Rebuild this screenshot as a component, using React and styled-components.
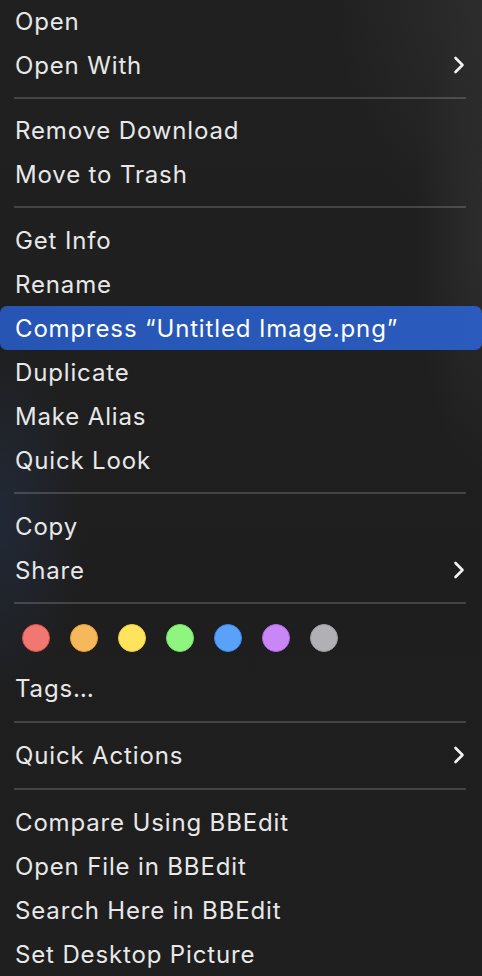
import React from 'react';
import styled, { createGlobalStyle } from 'styled-components';

const Global = createGlobalStyle`
  html, body {
    margin: 0;
    padding: 0;
    background: #1e1e1e;
  }
  body {
    font-family: Inter, "Noto Sans", sans-serif;
    -webkit-font-smoothing: antialiased;
  }
`;

const Menu = styled.div`
  width: 482px;
  height: 976px;
  overflow: hidden;
  box-sizing: border-box;
  margin-top: -1px;
  background:
    radial-gradient(ellipse 120px 260px at 0px 520px, rgba(40, 60, 100, 0.35), transparent 70%),
    radial-gradient(ellipse 200px 300px at 482px 0px, rgba(60, 60, 60, 0.45), transparent 75%),
    radial-gradient(ellipse 90px 320px at 482px 240px, rgba(70, 70, 70, 0.35), transparent 75%),
    linear-gradient(180deg, #202020 0%, #1e1e1e 60%, #1f1f1f 100%);
`;

const Item = styled.div`
  height: 44px;
  display: flex;
  align-items: center;
  justify-content: space-between;
  padding: 0 17px 0 15px;
  font-size: 24px;
  letter-spacing: 0.85px;
  color: ${p => (p.active ? '#ffffff' : '#e8e8e8')};
  background: ${p => (p.active ? 'linear-gradient(90deg, #2655b4, #2a5bbd)' : 'transparent')};
  border-radius: ${p => (p.active ? '7px' : '0')};
  white-space: nowrap;
`;

const Separator = styled.div`
  height: ${p => p.h || 21}px;
  box-sizing: border-box;
  display: flex;
  align-items: ${p => (p.top != null ? 'flex-start' : 'center')};
  padding: ${p => p.top || 0}px 16px 0 14px;

  &::after {
    content: '';
    flex: 1;
    height: 2px;
    background: rgba(255, 255, 255, 0.17);
  }
`;

const TagRow = styled.div`
  height: 56px;
  display: flex;
  align-items: center;
  gap: 20px;
  padding: 0 0 0 22px;
`;

const Dot = styled.span`
  width: 28px;
  height: 28px;
  border-radius: 50%;
  box-sizing: border-box;
  background: ${p => p.fill};
  border: 1.5px solid ${p => p.edge};
`;

const Chevron = () => (
  <svg width="12" height="18" viewBox="0 0 12 18" fill="none">
    <path d="M2.5 2 L9.5 9 L2.5 16" stroke="#f2f2f2" strokeWidth="2.6" strokeLinecap="round" strokeLinejoin="round" />
  </svg>
);

const tags = [
  ['#f07870', '#dc5048'],
  ['#f5b85a', '#e9a038'],
  ['#fee35e', '#f2cf3c'],
  ['#8ef57e', '#74e266'],
  ['#5aa2f9', '#3a88f0'],
  ['#c886f7', '#b46ae8'],
  ['#b1b1b5', '#9c9ca0'],
];

const Row = ({ label, sub, active }) => (
  <Item active={active}>
    <span>{label}</span>
    {sub && <Chevron />}
  </Item>
);

export default function App() {
  return (
    <>
      <Global />
      <Menu>
        <Row label="Open" />
        <Row label="Open With" sub />
        <Separator />
        <Row label="Remove Download" />
        <Row label="Move to Trash" />
        <Separator h={22} />
        <Row label="Get Info" />
        <Row label="Rename" />
        <Row label="Compress “Untitled Image.png”" active />
        <Row label="Duplicate" />
        <Row label="Make Alias" />
        <Row label="Quick Look" />
        <Separator h={22} />
        <Row label="Copy" />
        <Row label="Share" sub />
        <Separator h={18} top={10} />
        <TagRow>
          {tags.map(([fill, edge]) => (
            <Dot key={fill} fill={fill} edge={edge} />
          ))}
        </TagRow>
        <Row label="Tags…" />
        <Separator h={23} />
        <Row label="Quick Actions" sub />
        <Separator h={23} />
        <Row label="Compare Using BBEdit" />
        <Row label="Open File in BBEdit" />
        <Row label="Search Here in BBEdit" />
        <Row label="Set Desktop Picture" />
      </Menu>
    </>
  );
}
